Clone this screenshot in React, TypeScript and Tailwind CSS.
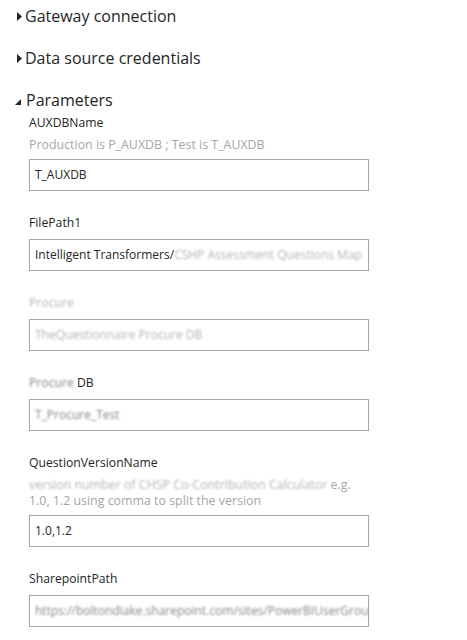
import type { ReactNode } from "react"

function Arrow({ open }: { open?: boolean }) {
    if (open) {
        return (
            <svg width="6" height="6" viewBox="0 0 6 6" className="ml-[2px] mr-[5px] mt-[3px]">
                <polygon points="6,0 6,6 0,6" fill="#252525" />
            </svg>
        )
    }
    return (
        <svg width="5" height="9" viewBox="0 0 5 9" className="mr-[3px] ml-[4px] mt-[1px]">
            <polygon points="0,0 5,4.5 0,9" fill="#252525" />
        </svg>
    )
}

function Section({ title, open }: { title: string; open?: boolean }) {
    return (
        <div className="flex items-center h-[24px] text-[16px] text-[#252525]">
            <Arrow open={open} />
            <span>{title}</span>
        </div>
    )
}

function Blur({ children, light }: { children: ReactNode; light?: boolean }) {
    return <span className={`inline-block blur-[1.2px] ${light ? "text-[#b4b4bc]" : "text-[#85858f]"}`}>{children}</span>
}

function Field({ label, desc, value }: { label: ReactNode; desc?: ReactNode; value: ReactNode }) {
    return (
        <div className="flex flex-col mt-[22px] first:mt-[1px]">
            <div className="h-[20px] leading-[20px] text-[12.2px] text-[#252525]">{label}</div>
            {desc && <div className="pt-[4px] leading-[16px] text-[12.4px] text-[#a6a6a6]">{desc}</div>}
            <div className="mt-[6px] h-[32px] w-[340px] border border-[#a6a6a6] bg-white px-[5px] flex items-center overflow-hidden whitespace-nowrap text-[12px] text-[#252525]">
                {value}
            </div>
        </div>
    )
}

export default function App() {
    return (
        <div className="w-[467px] h-[640px] bg-white overflow-hidden pt-[4px] pl-[13px]" style={{ fontFamily: '"Open Sans", "Noto Sans", sans-serif' }}>
            <div className="flex flex-col gap-[18px]">
                <Section title="Gateway connection" />
                <Section title="Data source credentials" />
                <Section title="Parameters" open />
            </div>
            <div className="flex flex-col pl-[16px]">
                <Field label="AUXDBName" desc="Production is P_AUXDB ; Test is T_AUXDB" value="T_AUXDB" />
                <Field label="FilePath1" value={<>Intelligent Transformers/<Blur light>CSHP Assessment Questions Map</Blur></>} />
                <Field label={<Blur light>Procure</Blur>} value={<Blur light>TheQuestionnaire Procure DB</Blur>} />
                <Field label={<><Blur>Procure</Blur> DB</>} value={<Blur>T_Procure_Test</Blur>} />
                <Field
                    label="QuestionVersionName"
                    desc={<><Blur light>version number of CHSP Co-Contribution Calculator</Blur> e.g.<br />1.0, 1.2 using comma to split the version</>}
                    value="1.0,1.2"
                />
                <Field label="SharepointPath" value={<Blur>https://boltondiake.sharepoint.com/sites/PowerBIUserGroup</Blur>} />
            </div>
        </div>
    )
}
